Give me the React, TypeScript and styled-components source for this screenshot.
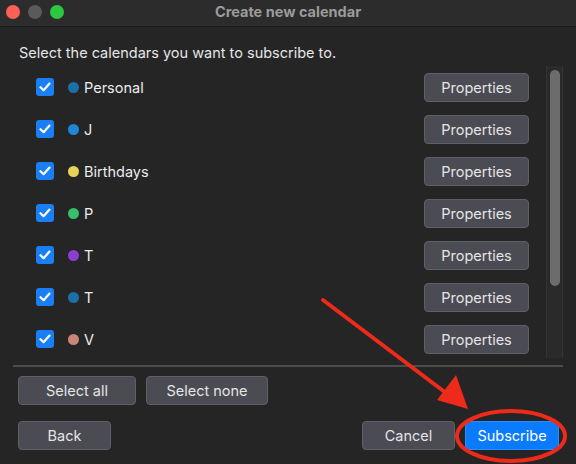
import React from "react";
import styled, { createGlobalStyle } from "styled-components";

const Global = createGlobalStyle`
  html, body { margin: 0; padding: 0; background: #252525; }
  body { font-family: "Inter", "Liberation Sans", sans-serif; -webkit-font-smoothing: antialiased; }
  * { box-sizing: border-box; }
`;

const Window = styled.div`
  position: relative;
  width: 576px;
  height: 464px;
  background: #252525;
  display: flex;
  flex-direction: column;
  overflow: hidden;
`;

const TitleBar = styled.div`
  height: 27px;
  flex: none;
  background: #2c2c2c;
  border-bottom: 1px solid #1b1b1b;
  display: flex;
  align-items: center;
  position: relative;
  padding-left: 6px;
  gap: 8px;
`;

const Light = styled.span<{ $c: string }>`
  width: 14px;
  height: 14px;
  border-radius: 50%;
  background: ${(p) => p.$c};
  margin-top: -2px;
`;

const Title = styled.div`
  position: absolute;
  left: 0;
  right: 0;
  top: 3px;
  text-align: center;
  font-size: 14.5px;
  font-weight: 700;
  color: #9b9b9b;
`;

const Body = styled.div`
  flex: 1;
  display: flex;
  flex-direction: column;
  padding: 0 13px 15px 13px;
`;

const Prompt = styled.div`
  font-size: 14.5px;
  color: #e6e6e6;
  padding: 17px 0 0 6px;
  height: 38px;
`;

const ListArea = styled.div`
  display: flex;
  height: 293px;
  padding-top: 1px;
  overflow: hidden;
`;

const Rows = styled.div`
  flex: 1;
  display: flex;
  flex-direction: column;
  padding-right: 17px;
  padding-left: 23px;
`;

const Row = styled.div`
  height: 42px;
  flex: none;
  display: flex;
  align-items: center;
`;

const Check = styled.span`
  width: 18px;
  height: 18px;
  border-radius: 3px;
  background: #1a7ff4;
  display: flex;
  align-items: center;
  justify-content: center;
`;

const Dot = styled.span<{ $c: string }>`
  width: 11px;
  height: 11px;
  border-radius: 50%;
  background: ${(p) => p.$c};
  margin-left: 14px;
  margin-right: 5px;
`;

const Name = styled.span`
  flex: 1;
  font-size: 14.5px;
  color: #ececec;
`;

const Button = styled.button<{ $w: number; $primary?: boolean }>`
  width: ${(p) => p.$w}px;
  height: 29px;
  border-radius: 4px;
  border: 1px solid ${(p) => (p.$primary ? "#2a8cff" : "#5f5f68")};
  background: ${(p) => (p.$primary ? "#0b7bfd" : "#4b4b53")};
  color: ${(p) => (p.$primary ? "#ffffff" : "#e4e4e6")};
  font-family: inherit;
  font-size: 14.5px;
  padding: 0;
  display: flex;
  align-items: center;
  justify-content: center;
`;

const Track = styled.div`
  width: 17px;
  background: #2a2a2a;
  border-left: 1px solid #333;
  border-right: 1px solid #333;
  display: flex;
  justify-content: center;
  padding-top: 4px;
`;

const Thumb = styled.div`
  width: 10px;
  height: 216px;
  border-radius: 5px;
  background: #6c6c6c;
`;

const Separator = styled.div`
  height: 2px;
  background: #4c4c4c;
  margin-top: 7px;
`;

const ButtonRow = styled.div<{ $top: number }>`
  display: flex;
  gap: 10px;
  margin-top: ${(p) => p.$top}px;
  padding-left: 5px;
  padding-right: 4px;
`;

const Spacer = styled.div`
  flex: 1;
`;

const Overlay = styled.svg`
  position: absolute;
  left: 0;
  top: 0;
  pointer-events: none;
`;

const calendars = [
  { name: "Personal", color: "#1c6fa8" },
  { name: "J", color: "#1e88d6" },
  { name: "Birthdays", color: "#e8d35a" },
  { name: "P", color: "#36c06a" },
  { name: "T", color: "#8a3fcf" },
  { name: "T", color: "#1c6fa8" },
  { name: "V", color: "#c98676" },
];

const CheckMark = () => (
  <svg width="12" height="10" viewBox="0 0 12 10">
    <path d="M1.5 5.2 L4.6 8.2 L10.5 1.6" fill="none" stroke="#fff" strokeWidth="2.2" strokeLinecap="round" strokeLinejoin="round" />
  </svg>
);

export default function App() {
  return (
    <Window>
      <Global />
      <TitleBar>
        <Light $c="#fe5f57" />
        <Light $c="#5a5a5a" />
        <Light $c="#2cc840" />
        <Title>Create new calendar</Title>
      </TitleBar>
      <Body>
        <Prompt>Select the calendars you want to subscribe to.</Prompt>
        <ListArea>
          <Rows>
            {calendars.map((c, i) => (
              <Row key={i}>
                <Check>
                  <CheckMark />
                </Check>
                <Dot $c={c.color} />
                <Name>{c.name}</Name>
                <Button $w={105}>Properties</Button>
              </Row>
            ))}
          </Rows>
          <Track>
            <Thumb />
          </Track>
        </ListArea>
        <Separator />
        <ButtonRow $top={9}>
          <Button $w={118}>Select all</Button>
          <Button $w={122}>Select none</Button>
        </ButtonRow>
        <ButtonRow $top={16}>
          <Button $w={93}>Back</Button>
          <Spacer />
          <Button $w={93}>Cancel</Button>
          <Button $w={94} $primary>
            Subscribe
          </Button>
        </ButtonRow>
      </Body>
      <Overlay width="576" height="464" viewBox="0 0 576 464">
        <line x1="323" y1="300" x2="450" y2="396" stroke="#ee2a1a" strokeWidth="4" strokeLinecap="round" />
        <polygon points="468,409 437,400 456,375" fill="#ee2a1a" />
        <ellipse cx="511" cy="436" rx="54" ry="25" fill="none" stroke="#ee2a1a" strokeWidth="4" />
      </Overlay>
    </Window>
  );
}
